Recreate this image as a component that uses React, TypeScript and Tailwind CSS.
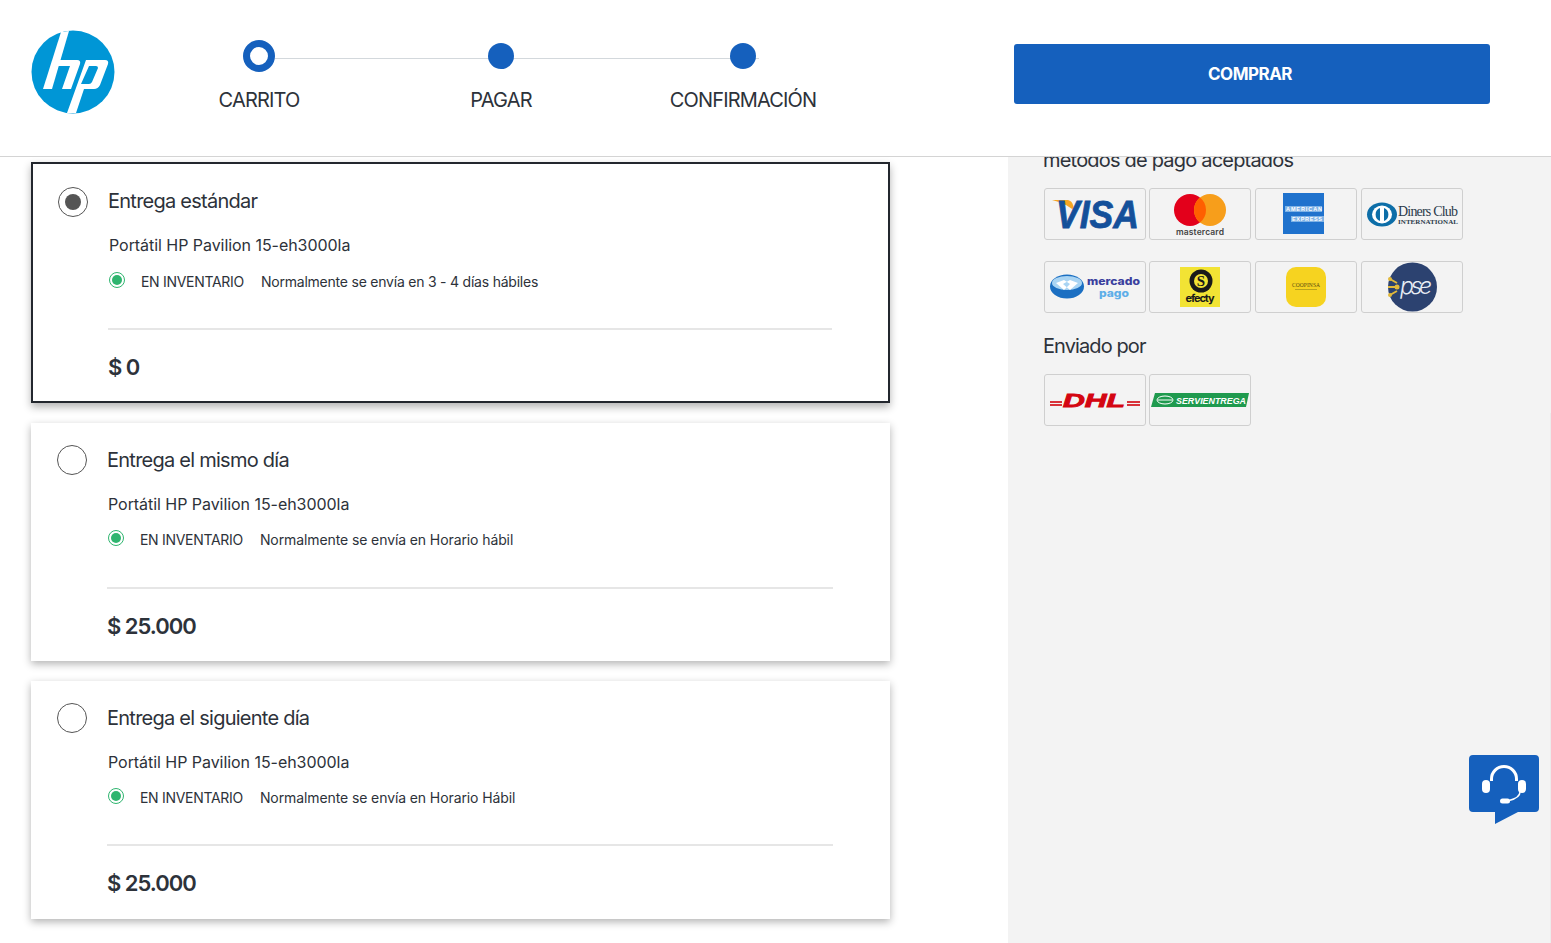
const font = "font-['Inter','Liberation_Sans',sans-serif]";

function HpLogo() {
  return (
    <svg width="84" height="84" viewBox="0 0 84 84">
      <circle cx="42" cy="42" r="41.5" fill="#0096d6" />
      <path fill="#fff" d="M30 2 L38 1 L21 59 H12 Z" />
      <path fill="#fff" d="M23 30 H46 Q50 30 49 34 L40 59 H31 L39 36 H21 Z" />
      <path fill="#fff" fillRule="evenodd" d="M55 30 H74 Q78 30 77 34 L69 55 Q67 59 63 59 H53 L45 83 H36 Z M58 36 L50 54 H58 Q60 54 61 52 L67 38 Q67 36 65 36 Z" />
    </svg>
  );
}

function Step({ label, active }: { label: string; active?: boolean }) {
  return (
    <div className="relative z-10 flex w-[242px] flex-col items-center">
      <div className="flex h-[32px] items-center justify-center">
        {active ? (
          <div className="h-[32px] w-[32px] rounded-full border-[7px] border-[#1560bd] bg-white" />
        ) : (
          <div className="h-[26px] w-[26px] rounded-full bg-[#1560bd]" />
        )}
      </div>
      <div className="mt-[16px] text-[20px] leading-[25px] tracking-[-0.85px] text-[#2d323a]">{label}</div>
    </div>
  );
}

function ShippingCard({ title, note, price, selected, divider = "mt-[34px]" }: { title: string; note: string; price: string; selected?: boolean; divider?: string }) {
  return (
    <div className={selected ? "h-[241px] border-2 border-[#23272e] bg-white pt-[23px] pl-[25px] pr-[56px] shadow-[0_4px_8px_rgba(0,0,0,0.3)]" : "h-[238px] bg-white pt-[22px] pl-[26px] pr-[57px] shadow-[0_3px_8px_rgba(0,0,0,0.3)]"}>
      <div className="flex items-center gap-[20px]">
        <div className="flex h-[30px] w-[30px] items-center justify-center rounded-full border border-[#555] bg-white">
          {selected && <div className="h-[16px] w-[16px] rounded-full bg-[#555]" />}
        </div>
        <div className={selected ? "-mt-[2px] text-[20px] leading-[30px] tracking-[-0.75px] text-[#2d323a]" : "text-[20px] leading-[30px] tracking-[-0.75px] text-[#2d323a]"}>{title}</div>
      </div>
      <div className={selected ? "mt-[16px] pl-[51px] text-[16px] leading-[24px] tracking-[-0.05px] text-[#2d323a]" : "mt-[17px] pl-[51px] text-[16px] leading-[24px] tracking-[-0.05px] text-[#2d323a]"}>Portátil HP Pavilion 15-eh3000la</div>
      <div className={selected ? "mt-[13px] flex items-center pl-[51px] text-[14px] leading-[24px] text-[#2d323a]" : "mt-[12px] flex items-center pl-[51px] text-[14px] leading-[24px] text-[#2d323a]"}>
        <div className="mb-[5px] flex h-[16px] w-[16px] items-center justify-center rounded-full border border-[#2fb56f]">
          <div className="h-[10px] w-[10px] rounded-full bg-[#2fb56f]" />
        </div>
        <span className="ml-[16px] tracking-[-0.3px]">EN INVENTARIO</span>
        <span className={selected ? "ml-[17px] tracking-[-0.22px]" : "ml-[17px] tracking-[-0.1px]"}>{note}</span>
      </div>
      <div className={`${divider} ml-[50px] border-t-2 border-[#e6e6e6]`} />
      <div className="mt-[22px] pl-[50px] text-[22px] leading-[30px] font-semibold tracking-[-1px] text-[#2d323a]">{price}</div>
    </div>
  );
}

function Badge({ children }: { children: React.ReactNode }) {
  return (
    <div className="flex h-[52px] w-[102px] items-center justify-center overflow-hidden rounded-[3px] border border-[#cfcfcf]">
      {children}
    </div>
  );
}

function Visa() {
  return (
    <svg width="100" height="48" viewBox="0 0 100 48">
      <path fill="#f6a623" d="M7 10 H23 Q27 11 28 15 L31 23 Q24 14 7 10 Z" />
      <text x="11" y="38" fontFamily="Liberation Sans" fontSize="38" fontWeight="700" fontStyle="italic" fill="#14509a" stroke="#14509a" strokeWidth="0.8" textLength="83" lengthAdjust="spacingAndGlyphs">VISA</text>
    </svg>
  );
}

function Mastercard() {
  return (
    <svg width="70" height="48" viewBox="0 0 70 48">
      <circle cx="25" cy="20" r="16" fill="#e3001b" />
      <circle cx="45" cy="20" r="16" fill="#f79e1b" />
      <path fill="#ff5f00" d="M35 7.5 A16 16 0 0 1 35 32.5 A16 16 0 0 1 35 7.5 Z" />
      <text x="35" y="45" textAnchor="middle" fontFamily="Inter" fontSize="8.5" fontWeight="600" fill="#444" textLength="48">mastercard</text>
    </svg>
  );
}

function Amex() {
  return (
    <svg width="46" height="42" viewBox="0 0 46 42">
      <rect width="41" height="41" fill="#1f72cd" />
      <rect x="2" y="13" width="37" height="6" fill="#7fb3e6" />
      <rect x="8" y="23" width="33" height="6" fill="#7fb3e6" />
      <text x="21" y="18" textAnchor="middle" fontFamily="Liberation Sans" fontSize="5.5" fontWeight="700" fill="#fff" textLength="36">AMERICAN</text>
      <text x="24" y="28" textAnchor="middle" fontFamily="Liberation Sans" fontSize="5.5" fontWeight="700" fill="#fff" textLength="30">EXPRESS</text>
    </svg>
  );
}

function Diners() {
  return (
    <svg width="94" height="28" viewBox="0 0 94 28">
      <ellipse cx="17" cy="14.5" rx="15" ry="12" fill="#0d6ea8" />
      <ellipse cx="17" cy="14.5" rx="10" ry="9" fill="#fff" />
      <path fill="#0d6ea8" d="M15 8 V21 A7 7 0 0 1 15 8 Z M19 8 A7 7 0 0 1 19 21 Z" />
      <text x="33" y="16" fontFamily="Liberation Serif" fontSize="14" fill="#2b3a4a" textLength="60">Diners Club</text>
      <text x="33" y="23.5" fontFamily="Liberation Serif" fontSize="7" fontWeight="700" fill="#2b3a4a" textLength="60">INTERNATIONAL</text>
    </svg>
  );
}

function MercadoPago() {
  return (
    <svg width="94" height="34" viewBox="0 0 94 34">
      <ellipse cx="19" cy="16.5" rx="17" ry="12" fill="#1b6fc2" />
      <ellipse cx="19" cy="13" rx="15" ry="7" fill="#a9d4f3" />
      <path d="M8 13 L16 10 L22 14 L16 20 Z M30 13 L22 10 L15 14 L22 20 Z" fill="#fff" />
      <text x="65.5" y="14.5" textAnchor="middle" fontFamily="Inter" fontSize="10.5" fontWeight="800" fill="#3a3f9e" textLength="53" lengthAdjust="spacingAndGlyphs">mercado</text>
      <text x="66" y="27.2" textAnchor="middle" fontFamily="Inter" fontSize="10.5" fontWeight="800" fill="#5eaee8" textLength="30" lengthAdjust="spacingAndGlyphs">pago</text>
    </svg>
  );
}

function Efecty() {
  return (
    <svg width="40" height="40" viewBox="0 0 40 40">
      <rect width="40" height="40" fill="#f2e334" />
      <circle cx="21" cy="14" r="11.5" fill="#1a1a1a" />
      <circle cx="21" cy="14" r="7" fill="#f2e334" />
      <text x="21" y="19" textAnchor="middle" fontFamily="Liberation Serif" fontSize="15" fontWeight="700" fill="#1a1a1a">S</text>
      <text x="20" y="35" textAnchor="middle" fontFamily="Inter" fontSize="11" fontWeight="700" fill="#1a1a1a" textLength="29">efecty</text>
    </svg>
  );
}

function Coopinsa() {
  return (
    <svg width="40" height="40" viewBox="0 0 40 40">
      <rect width="40" height="40" rx="10" fill="#f6d320" />
      <text x="20" y="20" textAnchor="middle" fontFamily="Liberation Serif" fontSize="5.5" fill="#5a4a10" textLength="28">COOPINSA</text>
      <rect x="9" y="22" width="22" height="1" fill="#b9a31c" />
    </svg>
  );
}

function Pse() {
  return (
    <svg width="50" height="50" viewBox="0 0 50 50">
      <circle cx="25.5" cy="25" r="24.5" fill="#2c4270" />
      <path d="M1 25 H12 M3 17 L10 21 M3 33 L10 29" stroke="#e2b93b" strokeWidth="2" />
      <circle cx="3" cy="17" r="2" fill="#e2b93b" />
      <circle cx="3" cy="33" r="2" fill="#e2b93b" />
      <circle cx="10" cy="25" r="2.5" fill="#e2b93b" />
      <text x="29" y="32" textAnchor="middle" fontFamily="Inter" fontSize="23" fontWeight="300" fontStyle="italic" fill="#e8edf5" textLength="32">pse</text>
    </svg>
  );
}

function Dhl() {
  return (
    <svg width="92" height="26" viewBox="0 0 92 26">
      <rect x="1" y="14" width="12" height="2" fill="#d8323a" />
      <rect x="1" y="17" width="12" height="2" fill="#d8323a" />
      <rect x="78" y="14" width="13" height="2" fill="#d8323a" />
      <rect x="78" y="17" width="13" height="2" fill="#d8323a" />
      <text x="45" y="19.5" textAnchor="middle" fontFamily="Liberation Sans" fontSize="19" fontWeight="700" fontStyle="italic" fill="#d40511" stroke="#d40511" strokeWidth="0.9" textLength="62" lengthAdjust="spacingAndGlyphs">DHL</text>
    </svg>
  );
}

function Servientrega() {
  return (
    <svg width="98" height="22" viewBox="0 -4 98 22">
      <path fill="#1f9a4e" d="M4 0 H98 L95 14 H0 Z" />
      <ellipse cx="14" cy="7" rx="8" ry="4" fill="none" stroke="#fff" strokeWidth="1" />
      <path d="M7 7 H21" stroke="#fff" strokeWidth="1" />
      <text x="25" y="10.5" fontFamily="Liberation Sans" fontSize="9" fontWeight="700" fontStyle="italic" fill="#fff" textLength="70" lengthAdjust="spacingAndGlyphs">SERVIENTREGA</text>
    </svg>
  );
}

function ChatBubble() {
  return (
    <svg className="absolute top-[755px] left-[1469px]" width="70" height="70" viewBox="0 0 70 70">
      <path fill="#1560bd" d="M4 0 H66 Q70 0 70 4 V53 Q70 57 66 57 H49 L26 69 V57 H4 Q0 57 0 53 V4 Q0 0 4 0 Z" />
      <path d="M22.5 26 V24 a12.5 12.5 0 0 1 25 0 V26" fill="none" stroke="#fff" strokeWidth="3" />
      <rect x="13" y="25" width="8" height="13" rx="4" fill="#fff" />
      <rect x="49" y="25" width="8" height="13" rx="4" fill="#fff" />
      <path d="M51 37 C51 42 46 44 40 45.5" fill="none" stroke="#fff" strokeWidth="1.5" />
      <rect x="31" y="43.5" width="10" height="5" rx="2.5" fill="#fff" />
    </svg>
  );
}

export default function App() {
  return (
    <div className={`${font} relative h-[943px] overflow-hidden bg-white`}>
      <header className="relative z-20 flex h-[157px] items-start border-b border-[#d4d4d4] bg-white">
        <div className="mt-[30px] ml-[31px]">
          <HpLogo />
        </div>
        <div className="relative mt-[40px] ml-[23px] flex">
          <div className="absolute top-[18px] left-[137px] h-px w-[484px] bg-[#d3d8dc]" />
          <Step label="CARRITO" active />
          <Step label="PAGAR" />
          <Step label="CONFIRMACIÓN" />
        </div>
        <button className="mt-[44px] ml-[150px] h-[60px] w-[476px] rounded-[3px] bg-[#1560bd] pt-[2px] pr-[4px] text-[17px] font-bold tracking-[-0.5px] text-white">
          COMPRAR
        </button>
      </header>
      <main className="flex h-[786px]">
        <div className="flex w-[1008px] flex-col gap-[20px] pt-[5px] pr-[118px] pl-[31px]">
          <ShippingCard selected title="Entrega estándar" note="Normalmente se envía en 3 - 4 días hábiles" price="$ 0" />
          <ShippingCard divider="mt-[35px]" title="Entrega el mismo día" note="Normalmente se envía en Horario hábil" price="$ 25.000" />
          <ShippingCard title="Entrega el siguiente día" note="Normalmente se envía en Horario Hábil" price="$ 25.000" />
        </div>
        <aside className="flex-1 bg-[#f3f3f3] pl-[36px] text-[#2d323a]">
          <div className="-mt-[9px] -ml-px text-[20px] leading-[24px] tracking-[-0.8px]">métodos de pago aceptados</div>
          <div className="mt-[16px] grid grid-cols-[105px_106px_106px_102px] gap-y-[21px]">
            <Badge><Visa /></Badge>
            <Badge><Mastercard /></Badge>
            <Badge><Amex /></Badge>
            <Badge><Diners /></Badge>
            <Badge><MercadoPago /></Badge>
            <Badge><Efecty /></Badge>
            <Badge><Coopinsa /></Badge>
            <Badge><Pse /></Badge>
          </div>
          <div className="mt-[21px] -ml-px text-[20px] leading-[24px] tracking-[-0.9px]">Enviado por</div>
          <div className="mt-[16px] flex gap-[3px]">
            <Badge><Dhl /></Badge>
            <Badge><Servientrega /></Badge>
          </div>
        </aside>
      </main>
      <div className="absolute top-[413px] right-0 h-[530px] w-px bg-[#ececec]" />
      <ChatBubble />
    </div>
  );
}
